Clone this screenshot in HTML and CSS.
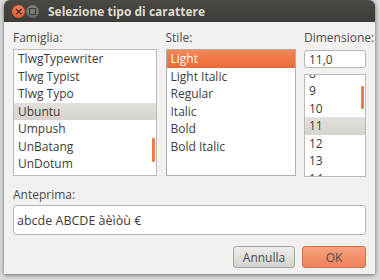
FILE: index.html
```html
<!DOCTYPE html>
<html>
<head>
  <meta charset="UTF-8">
  <title>Selezione tipo di carattere</title>
  <link rel="stylesheet" href="styles.css">
</head>
<body>
  <div class="dialog">
    <div class="titlebar">
      <span class="winbtn close">&#215;</span>
      <span class="winbtn min"><span class="sq"></span></span>
      <span class="title">Selezione tipo di carattere</span>
    </div>
    <div class="content">
      <div class="columns">
        <div class="col">
          <label>Famiglia:</label>
          <div class="list family">
            <ul>
              <li>TlwgTypewriter</li>
              <li>Tlwg Typist</li>
              <li>Tlwg Typo</li>
              <li class="current">Ubuntu</li>
              <li>Umpush</li>
              <li>UnBatang</li>
              <li>UnDotum</li>
            </ul>
            <span class="thumb"></span>
          </div>
        </div>
        <div class="col">
          <label>Stile:</label>
          <div class="list style">
            <ul>
              <li class="selected">Light</li>
              <li>Light Italic</li>
              <li>Regular</li>
              <li>Italic</li>
              <li>Bold</li>
              <li>Bold Italic</li>
            </ul>
          </div>
        </div>
        <div class="col">
          <label>Dimensione:</label>
          <div class="entry size-entry">11,0</div>
          <div class="list size">
            <ul>
              <li>8</li>
              <li>9</li>
              <li>10</li>
              <li class="current">11</li>
              <li>12</li>
              <li>13</li>
              <li>14</li>
            </ul>
            <span class="thumb"></span>
          </div>
        </div>
      </div>
      <label class="preview-label">Anteprima:</label>
      <div class="entry preview">abcde ABCDE àèìòù €</div>
      <div class="buttons">
        <button class="btn">Annulla</button>
        <button class="btn ok">OK</button>
      </div>
    </div>
  </div>
</body>
</html>
```

FILE: styles.css
```css
body {
  margin: 0;
  width: 380px;
  height: 280px;
  overflow: hidden;
  background-color: #dcdcdc;
  font-family: 'Open Sans', 'Noto Sans', sans-serif;
  font-size: 12px;
  color: #3c3c3c;
}

.dialog {
  margin-left: 4px;
  width: 371px;
  height: 274px;
  display: flex;
  flex-direction: column;
  background-color: #f2f1f0;
  border-radius: 6px 6px 0 0;
  box-shadow: 0 1px 4px rgba(0, 0, 0, 0.55);
  overflow: hidden;
}

.titlebar {
  height: 22px;
  flex: none;
  display: flex;
  align-items: center;
  padding-left: 8px;
  background: linear-gradient(#4a4944, #3c3b37);
}

.winbtn {
  width: 13px;
  height: 13px;
  border-radius: 50%;
  display: flex;
  align-items: center;
  justify-content: center;
  margin-right: 1px;
}

.close {
  background: radial-gradient(circle at 50% 35%, #f48a5e, #de4c1b);
  color: #4a2a1c;
  font-size: 11px;
  font-weight: bold;
  line-height: 1;
  font-family: 'DejaVu Sans', sans-serif;
}

.min {
  background: radial-gradient(circle at 50% 35%, #8c8a85, #5d5c58);
}

.min .sq {
  width: 5px;
  height: 5px;
  border: 1px solid #3f3e3a;
  background-color: #7a7873;
}

.title {
  margin-left: 8px;
  color: #dfdbd2;
  font-weight: bold;
  font-size: 12px;
}

.content {
  flex-grow: 1;
  padding: 7px 9px 0 9px;
  display: flex;
  flex-direction: column;
}

.columns {
  display: grid;
  grid-template-columns: 144px 130px 62px;
  column-gap: 8.5px;
}

.col {
  display: flex;
  flex-direction: column;
}

label {
  display: block;
  height: 17px;
  line-height: 17px;
  margin-bottom: 3px;
  color: #4c4c4c;
}

.list {
  position: relative;
  height: 125px;
  border: 1px solid #bdbab5;
  background-color: #fff;
  overflow: hidden;
}

.list ul {
  list-style-type: none;
  margin: 0;
  padding: 0;
}

.list li {
  height: 17.5px;
  line-height: 17.5px;
  padding-left: 4px;
}

.list li.current {
  background: linear-gradient(#e2e0dc, #d6d3ce);
}

.list li.selected {
  background: linear-gradient(#f58658, #ea6a36);
  color: #fff;
}

.style {
  border-color: #b2afaa;
}

.thumb {
  position: absolute;
  right: 1px;
  width: 3px;
  border-radius: 1px;
  background-color: #ef7b4d;
}

.family .thumb {
  top: 88px;
  height: 24px;
}

.entry {
  border: 1px solid #b8b5b0;
  border-radius: 3px;
  background-color: #fff;
  padding-left: 4px;
  display: flex;
  align-items: center;
}

.size-entry {
  height: 16px;
  margin-top: 1px;
  margin-bottom: 6px;
}

.size {
  height: 101px;
}

.size ul {
  margin-top: -10.5px;
}

.size .thumb {
  top: 11px;
  height: 23px;
}

.preview-label {
  margin-top: 9px;
  margin-bottom: 2px;
}

.preview {
  height: 28px;
  padding-left: 3px;
  font-size: 12.5px;
}

.buttons {
  display: flex;
  justify-content: flex-end;
  gap: 7px;
  margin-top: 11px;
}

.btn {
  width: 62px;
  height: 22px;
  border: 1px solid #a9a6a1;
  border-radius: 3px;
  background: linear-gradient(#efedeb, #d4d1cc);
  font-family: inherit;
  font-size: 12px;
  color: #4c4c4c;
  padding: 0;
}

.btn.ok {
  width: 64px;
  border-color: #d0714a;
  background: linear-gradient(#f8a281, #ef8159);
}
```
